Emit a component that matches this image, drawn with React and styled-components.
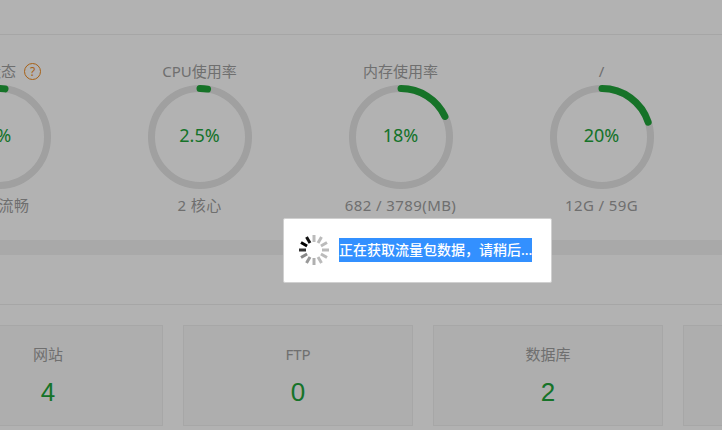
import React from 'react';
import styled, { createGlobalStyle } from 'styled-components';

const FONT = '"Noto Sans", "Noto Sans CJK SC", sans-serif';

const GlobalStyle = createGlobalStyle`
    html, body {
        margin: 0;
        padding: 0;
        width: 722px;
        height: 430px;
        overflow: hidden;
        background: #fff;
        font-family: ${FONT};
    }
`;

const Page = styled.div`
    width: 722px;
    height: 430px;
    overflow: hidden;
`;

const TopBar = styled.div`
    height: 34px;
    border-bottom: 1px solid #eee;
`;

const GaugeRow = styled.div`
    display: grid;
    grid-template-columns: repeat(4, 201px);
    margin-left: -102px;
    padding-top: 25px;
    height: 180px;
`;

const Gauge = styled.div`
    display: flex;
    flex-direction: column;
    align-items: center;
`;

const GaugeTitle = styled.div`
    display: flex;
    align-items: center;
    gap: 8px;
    height: 22px;
    font-size: 15px;
    line-height: 22px;
    color: #a0a0a0;
`;

const Help = styled.span`
    width: 15px;
    height: 15px;
    border: 1px solid #f08a1d;
    border-radius: 50%;
    color: #f08a1d;
    font-size: 12px;
    line-height: 15px;
    text-align: center;
`;

const Dial = styled.div`
    position: relative;
    width: 104px;
    height: 104px;
    margin-top: 3px;
`;

const DialValue = styled.div`
    position: absolute;
    inset: 0 0 5px 0;
    display: flex;
    align-items: center;
    justify-content: center;
    font-size: 18px;
    color: #20a53a;
`;

const GaugeNote = styled.div`
    margin-top: 5px;
    font-size: 15px;
    letter-spacing: 0.4px;
    line-height: 22px;
    color: #a0a0a0;
`;

const Band = styled.div`
    height: 15px;
    background: #f2f2f2;
`;

const Divider = styled.div`
    height: 49px;
    border-bottom: 1px solid #eee;
`;

const CardRow = styled.div`
    display: grid;
    grid-template-columns: repeat(5, 230px);
    gap: 20px;
    margin: 20px 0 0 -67px;
`;

const Card = styled.div`
    box-sizing: border-box;
    height: 101px;
    padding-top: 17px;
    border: 1px solid #f0f0f0;
    background: #f9f9f9;
    text-align: center;
`;

const CardLabel = styled.div`
    font-size: 15px;
    line-height: 22px;
    color: #a0a0a0;
`;

const CardCount = styled.div`
    margin-top: 9px;
    font-family: "Liberation Sans", Arial, sans-serif;
    font-size: 26px;
    line-height: 36px;
    color: #20a53a;
`;

const Shade = styled.div`
    position: fixed;
    inset: 0;
    background: rgba(0, 0, 0, 0.3);
`;

const Message = styled.div`
    position: fixed;
    left: 283px;
    top: 218px;
    box-sizing: border-box;
    width: 269px;
    height: 65px;
    display: flex;
    align-items: center;
    gap: 9px;
    padding: 0 0 1px 14px;
    background: #fff;
    border: 1px solid #d0d0d0;
    border-radius: 2px;
`;

const MessageText = styled.span`
    font-size: 14px;
    font-weight: 500;
    line-height: 24px;
    color: #fff;
    background: #3390ff;
    white-space: nowrap;
`;

const gauges = [
    { title: '负载状态', help: true, value: '2%', percent: 2, note: '运行流畅' },
    { title: 'CPU使用率', value: '2.5%', percent: 2.5, note: '2 核心' },
    { title: '内存使用率', value: '18%', percent: 18, note: '682 / 3789(MB)' },
    { title: '/', value: '20%', percent: 20, note: '12G / 59G' },
];

const cards = [
    { label: '网站', count: 4 },
    { label: 'FTP', count: 0 },
    { label: '数据库', count: 2 },
    { label: '', count: '' },
];

const tickColors = ['#bbb', '#bbb', '#bbb', '#bbb', '#bbb', '#b0b0b0', '#999', '#888', '#333', '#000', '#111', '#bbb'];

function Spinner() {
    return (
        <svg width="32" height="32" viewBox="0 0 32 32">
            {tickColors.map((color, i) => (
                <line key={i} x1="16" y1="1" x2="16" y2="8" stroke={color} strokeWidth="3"
                      transform={`rotate(${(i + 1) * 30} 16 16)`} />
            ))}
        </svg>
    );
}

function Ring({ percent }) {
    const r = 48.5;
    const len = 2 * Math.PI * r;
    const arc = (len * percent) / 100;
    return (
        <svg width="104" height="104" viewBox="0 0 104 104">
            <circle cx="52" cy="52" r={r} fill="none" stroke="#e5e5e5" strokeWidth="7" />
            <circle cx="52" cy="52" r={r} fill="none" stroke="#20a53a" strokeWidth="7"
                    strokeLinecap="round" strokeDasharray={`${arc} ${len}`}
                    transform="rotate(-90 52 52)" />
        </svg>
    );
}

export default function App() {
    return (
        <Page>
            <GlobalStyle />
            <TopBar />
            <GaugeRow>
                {gauges.map((g) => (
                    <Gauge key={g.title}>
                        <GaugeTitle>
                            {g.title}
                            {g.help && <Help>?</Help>}
                        </GaugeTitle>
                        <Dial>
                            <Ring percent={g.percent} />
                            <DialValue>{g.value}</DialValue>
                        </Dial>
                        <GaugeNote>{g.note}</GaugeNote>
                    </Gauge>
                ))}
            </GaugeRow>
            <Band />
            <Divider />
            <CardRow>
                {cards.map((c, i) => (
                    <Card key={i}>
                        <CardLabel>{c.label}</CardLabel>
                        <CardCount>{c.count}</CardCount>
                    </Card>
                ))}
            </CardRow>
            <Shade />
            <Message>
                <Spinner />
                <MessageText>正在获取流量包数据，请稍后...</MessageText>
            </Message>
        </Page>
    );
}
